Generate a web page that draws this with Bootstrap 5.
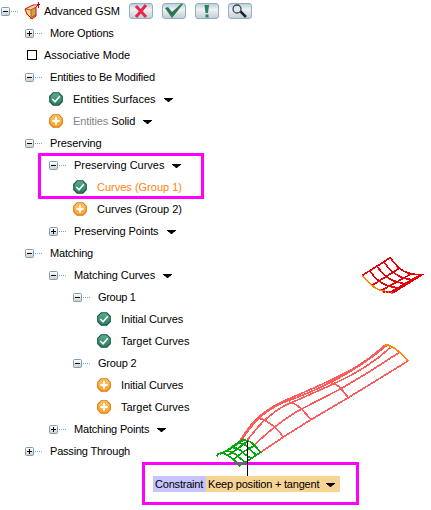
<!DOCTYPE html>
<html lang="en">
<head>
<meta charset="utf-8">
<title>Advanced GSM</title>
<link href="https://cdn.jsdelivr.net/npm/bootstrap@5.3.0/dist/css/bootstrap.min.css" rel="stylesheet">
<style>
body{width:431px;height:510px;overflow:hidden;background:#fff;color:#000;font:11px/22px "Liberation Sans",Arial,sans-serif}
svg{display:block;flex:none}
.tree ul{padding-left:24px}
.line{height:22px;white-space:nowrap}
.exp{width:24px;height:11px;margin-right:2px}
.state{width:14px;height:14px;margin:0 10px 0 1px}
.caret{width:9px;height:4px;margin:2px 0 0 8px}
.tools{gap:9px;margin-left:auto;margin-right:179px}
.tool{width:24px;height:16px}
.s1{letter-spacing:-.1px}.s2{letter-spacing:-.2px}.s3{letter-spacing:-.3px}
.orange{color:#ff8210}.dim{color:#848284}
.scene{left:0;top:0;z-index:3;pointer-events:none}
.mark-a,.mark-b{border:3px solid #f0f;z-index:2}
.mark-a{left:38px;top:153px;width:166px;height:46px}
.mark-b{left:142px;top:462px;width:217px;height:43px;padding:11px 0 0 8px}
.tag-name,.tag-value{height:16px;line-height:16px;white-space:nowrap}
.tag-name{width:53px;padding-left:2px;background:#c6c3ff}
.tag-value{width:134px;padding-left:2px;background:#f7d394}
.tag-value .caret{margin-left:7px}
.app-title{margin-left:2px}
.box{width:10px;height:10px;border:1px solid #000;margin:0 7px 0 3px}
</style>
<script src="https://cdn.jsdelivr.net/npm/bootstrap@5.3.0/dist/js/bootstrap.bundle.min.js"></script>
</head>
<body class="position-relative">
<svg width="0" height="0" class="position-absolute">
<defs>
<linearGradient id="gb" x2="0" y2="1"><stop stop-color="#fff"/><stop offset="1" stop-color="#d2cdc4"/></linearGradient>
<linearGradient id="gg" x2="0" y2="1"><stop stop-color="#5cae90"/><stop offset="1" stop-color="#277a60"/></linearGradient>
<linearGradient id="go" x2="0" y2="1"><stop stop-color="#ffd070"/><stop offset="1" stop-color="#ffa020"/></linearGradient>
<linearGradient id="gt" x2="0" y2="1"><stop stop-color="#b8ccd8"/><stop offset=".4" stop-color="#f0f1f1"/><stop offset="1" stop-color="#c4ccd0"/></linearGradient>
</defs>
<symbol id="minus" viewBox="0 0 24 11"><rect x="1.5" y="1.5" width="8" height="8" rx="1" fill="url(#gb)" stroke="#7b9ebd"/><path d="M3 5.5h5" stroke="#000"/><path d="M11 5.5h7" stroke="#7ba0c4" stroke-dasharray="1 1"/></symbol>
<symbol id="plus" viewBox="0 0 24 11"><use href="#minus"/><path d="M5.5 3v5" stroke="#000"/></symbol>
<symbol id="ok" viewBox="0 0 15 15"><path d="M4.5.8h6l3.700 3.700v6l-3.700 3.700h-6L.8 10.500v-6z" fill="url(#gg)" stroke="#185848" stroke-width="1.2"/><path d="M3.500 7.500l3 3 5-6" fill="none" stroke="#fff" stroke-width="1.7"/></symbol>
<symbol id="add" viewBox="0 0 15 15"><path d="M4.500.8h6l3.700 3.700v6l-3.700 3.700h-6L.8 10.500v-6z" fill="url(#go)" stroke="#d67808" stroke-width="1.2"/><path d="M6 3h3v3h3v3H9v3H6V9H3V6h3z" fill="#fff" stroke="#ef9418" stroke-width=".6"/></symbol>
<symbol id="car" viewBox="0 0 9 4"><path d="M0 0h9v1H8v1H7L5 4H4L2 2H1V1H0z"/></symbol>
<symbol id="face" viewBox="0 0 24 16"><rect x=".5" y=".5" width="23" height="15" rx="2.5" fill="url(#gt)" stroke="#8cb0c4"/></symbol>
</svg>

<main class="tree">
<div class="line d-flex align-items-center">
<svg class="exp me-0"><use href="#minus"/></svg>
<svg width="18" height="20" viewBox="0 0 18 20"><path d="M1 8l8-4 3 2v9l-5 3-5-4z" fill="#ffd48c"/><path d="M7 9l5-3v9l-5 3z" fill="#d6a04a"/><path d="M2 8l5 1 5-3M7 9v9M8 16l4-2" fill="none" stroke="#9c6510"/><path d="M14 4L9 4 1 8l2 5 5 5 4-3V6z" fill="none" stroke="#d80820"/><path d="M14.500 1v6M13 3.500h3" stroke="#b80018"/></svg>
<span class="app-title s1">Advanced GSM</span>
<span class="tools d-flex">
<svg class="tool"><use href="#face"/><path d="M7 3l10 11M17 2L7 14" stroke="#e42850" stroke-width="3"/></svg>
<svg class="tool"><use href="#face"/><path d="M3 5l3-1 4 5 9-8h2L10 15z" fill="#28765c"/></svg>
<svg class="tool"><use href="#face"/><path d="M9.500 2h4.500l-1 8h-2.500zM10.500 11.500h3v3h-3z" fill="#288068"/></svg>
<svg class="tool"><use href="#face"/><path d="M12 8l6 6" stroke="#202040" stroke-width="2.5"/><circle cx="9" cy="6" r="4" fill="#dce9f1" stroke="#424252" stroke-width="1.3"/></svg>
</span>
</div>
<ul class="list-unstyled m-0">
<li><div class="line d-flex align-items-center"><svg class="exp"><use href="#plus"/></svg><span class="s2">More Options</span></div></li>
<li><div class="line d-flex align-items-center"><i class="box"></i><span>Associative Mode</span></div></li>
<li><div class="line d-flex align-items-center"><svg class="exp"><use href="#minus"/></svg><span class="s2">Entities to Be Modified</span></div>
<ul class="list-unstyled">
<li class="line d-flex align-items-center"><svg class="state"><use href="#ok"/></svg><span>Entities Surfaces</span><svg class="caret"><use href="#car"/></svg></li>
<li class="line d-flex align-items-center"><svg class="state"><use href="#add"/></svg><span class="s1"><span class="dim">Entities</span> Solid</span><svg class="caret"><use href="#car"/></svg></li>
</ul></li>
<li><div class="line d-flex align-items-center"><svg class="exp"><use href="#minus"/></svg><span class="s1">Preserving</span></div>
<ul class="list-unstyled">
<li><div class="line d-flex align-items-center"><svg class="exp"><use href="#minus"/></svg><span>Preserving Curves</span><svg class="caret"><use href="#car"/></svg></div>
<ul class="list-unstyled">
<li class="line d-flex align-items-center"><svg class="state"><use href="#ok"/></svg><span class="orange">Curves (Group 1)</span></li>
<li class="line d-flex align-items-center"><svg class="state"><use href="#add"/></svg><span>Curves (Group 2)</span></li>
</ul></li>
<li><div class="line d-flex align-items-center"><svg class="exp"><use href="#plus"/></svg><span class="s1">Preserving Points</span><svg class="caret"><use href="#car"/></svg></div></li>
</ul></li>
<li><div class="line d-flex align-items-center"><svg class="exp"><use href="#minus"/></svg><span class="s2">Matching</span></div>
<ul class="list-unstyled">
<li><div class="line d-flex align-items-center"><svg class="exp"><use href="#minus"/></svg><span class="s1">Matching Curves</span><svg class="caret"><use href="#car"/></svg></div>
<ul class="list-unstyled">
<li><div class="line d-flex align-items-center"><svg class="exp"><use href="#minus"/></svg><span class="s3">Group 1</span></div>
<ul class="list-unstyled">
<li class="line d-flex align-items-center"><svg class="state"><use href="#ok"/></svg><span class="s1">Initial Curves</span></li>
<li class="line d-flex align-items-center"><svg class="state"><use href="#ok"/></svg><span>Target Curves</span></li>
</ul></li>
<li><div class="line d-flex align-items-center"><svg class="exp"><use href="#minus"/></svg><span class="s2">Group 2</span></div>
<ul class="list-unstyled">
<li class="line d-flex align-items-center"><svg class="state"><use href="#add"/></svg><span class="s1">Initial Curves</span></li>
<li class="line d-flex align-items-center"><svg class="state"><use href="#add"/></svg><span>Target Curves</span></li>
</ul></li>
</ul></li>
<li><div class="line d-flex align-items-center"><svg class="exp"><use href="#plus"/></svg><span class="s2">Matching Points</span><svg class="caret"><use href="#car"/></svg></div></li>
</ul></li>
<li><div class="line d-flex align-items-center"><svg class="exp"><use href="#plus"/></svg><span class="s2">Passing Through</span></div></li>
</ul>
</main>

<svg class="scene position-absolute" width="431" height="510" fill="none" shape-rendering="crispEdges">
<g transform="translate(210 335) scale(.33333)" stroke="#ff5959" stroke-width="5">
<path d="M152 352L220 306L303 254L415 188L594 78"/>
<path d="M88 320C130 250 170 220 235 192S330 152 390 122S480 70 524 31"/>
<path d="M93 318C135 252 175 218 240 195S340 154 390 127S490 65 530 31"/>
<path d="M112 315C140 280 158 260 170 250S215 212 245 203L370 147C430 120 490 85 541 38"/>
<path d="M133 330C170 295 220 250 275 222L393 161L480 109L567 53"/>
<path d="M138 252Q150 248 165 256Q198 274 220 306M238 202Q250 201 275 222L303 254M362 144Q378 144 393 161L415 188"/>
<path d="M522 32Q530 27 541 33Q567 45 594 78" stroke="#ff8200"/>
<path d="M20 364L24 357L45 350L97 314Q118 315 133 330L152 352L106 382L88 392Q68 366 35 352M97 314Q82 322 70 338M48 347Q70 350 86 366L106 382M68 338Q88 338 105 358L124 370M85 325Q105 325 120 343L138 360M30 358L62 341L97 317M52 363L82 342L113 318M70 374L100 350L134 332" stroke="#00a808"/>
</g>
<g transform="translate(350 245) scale(.33333)" stroke="#e80008" stroke-width="5">
<path d="M36 92L121 38Q142 68 160 78T215 90L128 144M60 78Q80 108 105 119T150 128M82 65Q103 96 128 106T172 116M102 51Q123 82 149 94T195 103M68 120L148 70M95 136L183 87"/>
<path d="M125 141L205 95" stroke-width="8"/>
<path d="M36 92Q65 122 78 130T128 144" stroke="#ff8200"/>
<path d="M100 142h30" stroke-dasharray="4 5"/>
</g>
<path d="M247.500 441v35" stroke="#000"/>
</svg>
<div class="mark-a position-absolute"></div>
<div class="mark-b position-absolute d-flex"><span class="tag-name s2">Constraint</span><span class="tag-value d-flex align-items-center s2">Keep position + tangent<svg class="caret"><use href="#car"/></svg></span></div>
</body>
</html>
